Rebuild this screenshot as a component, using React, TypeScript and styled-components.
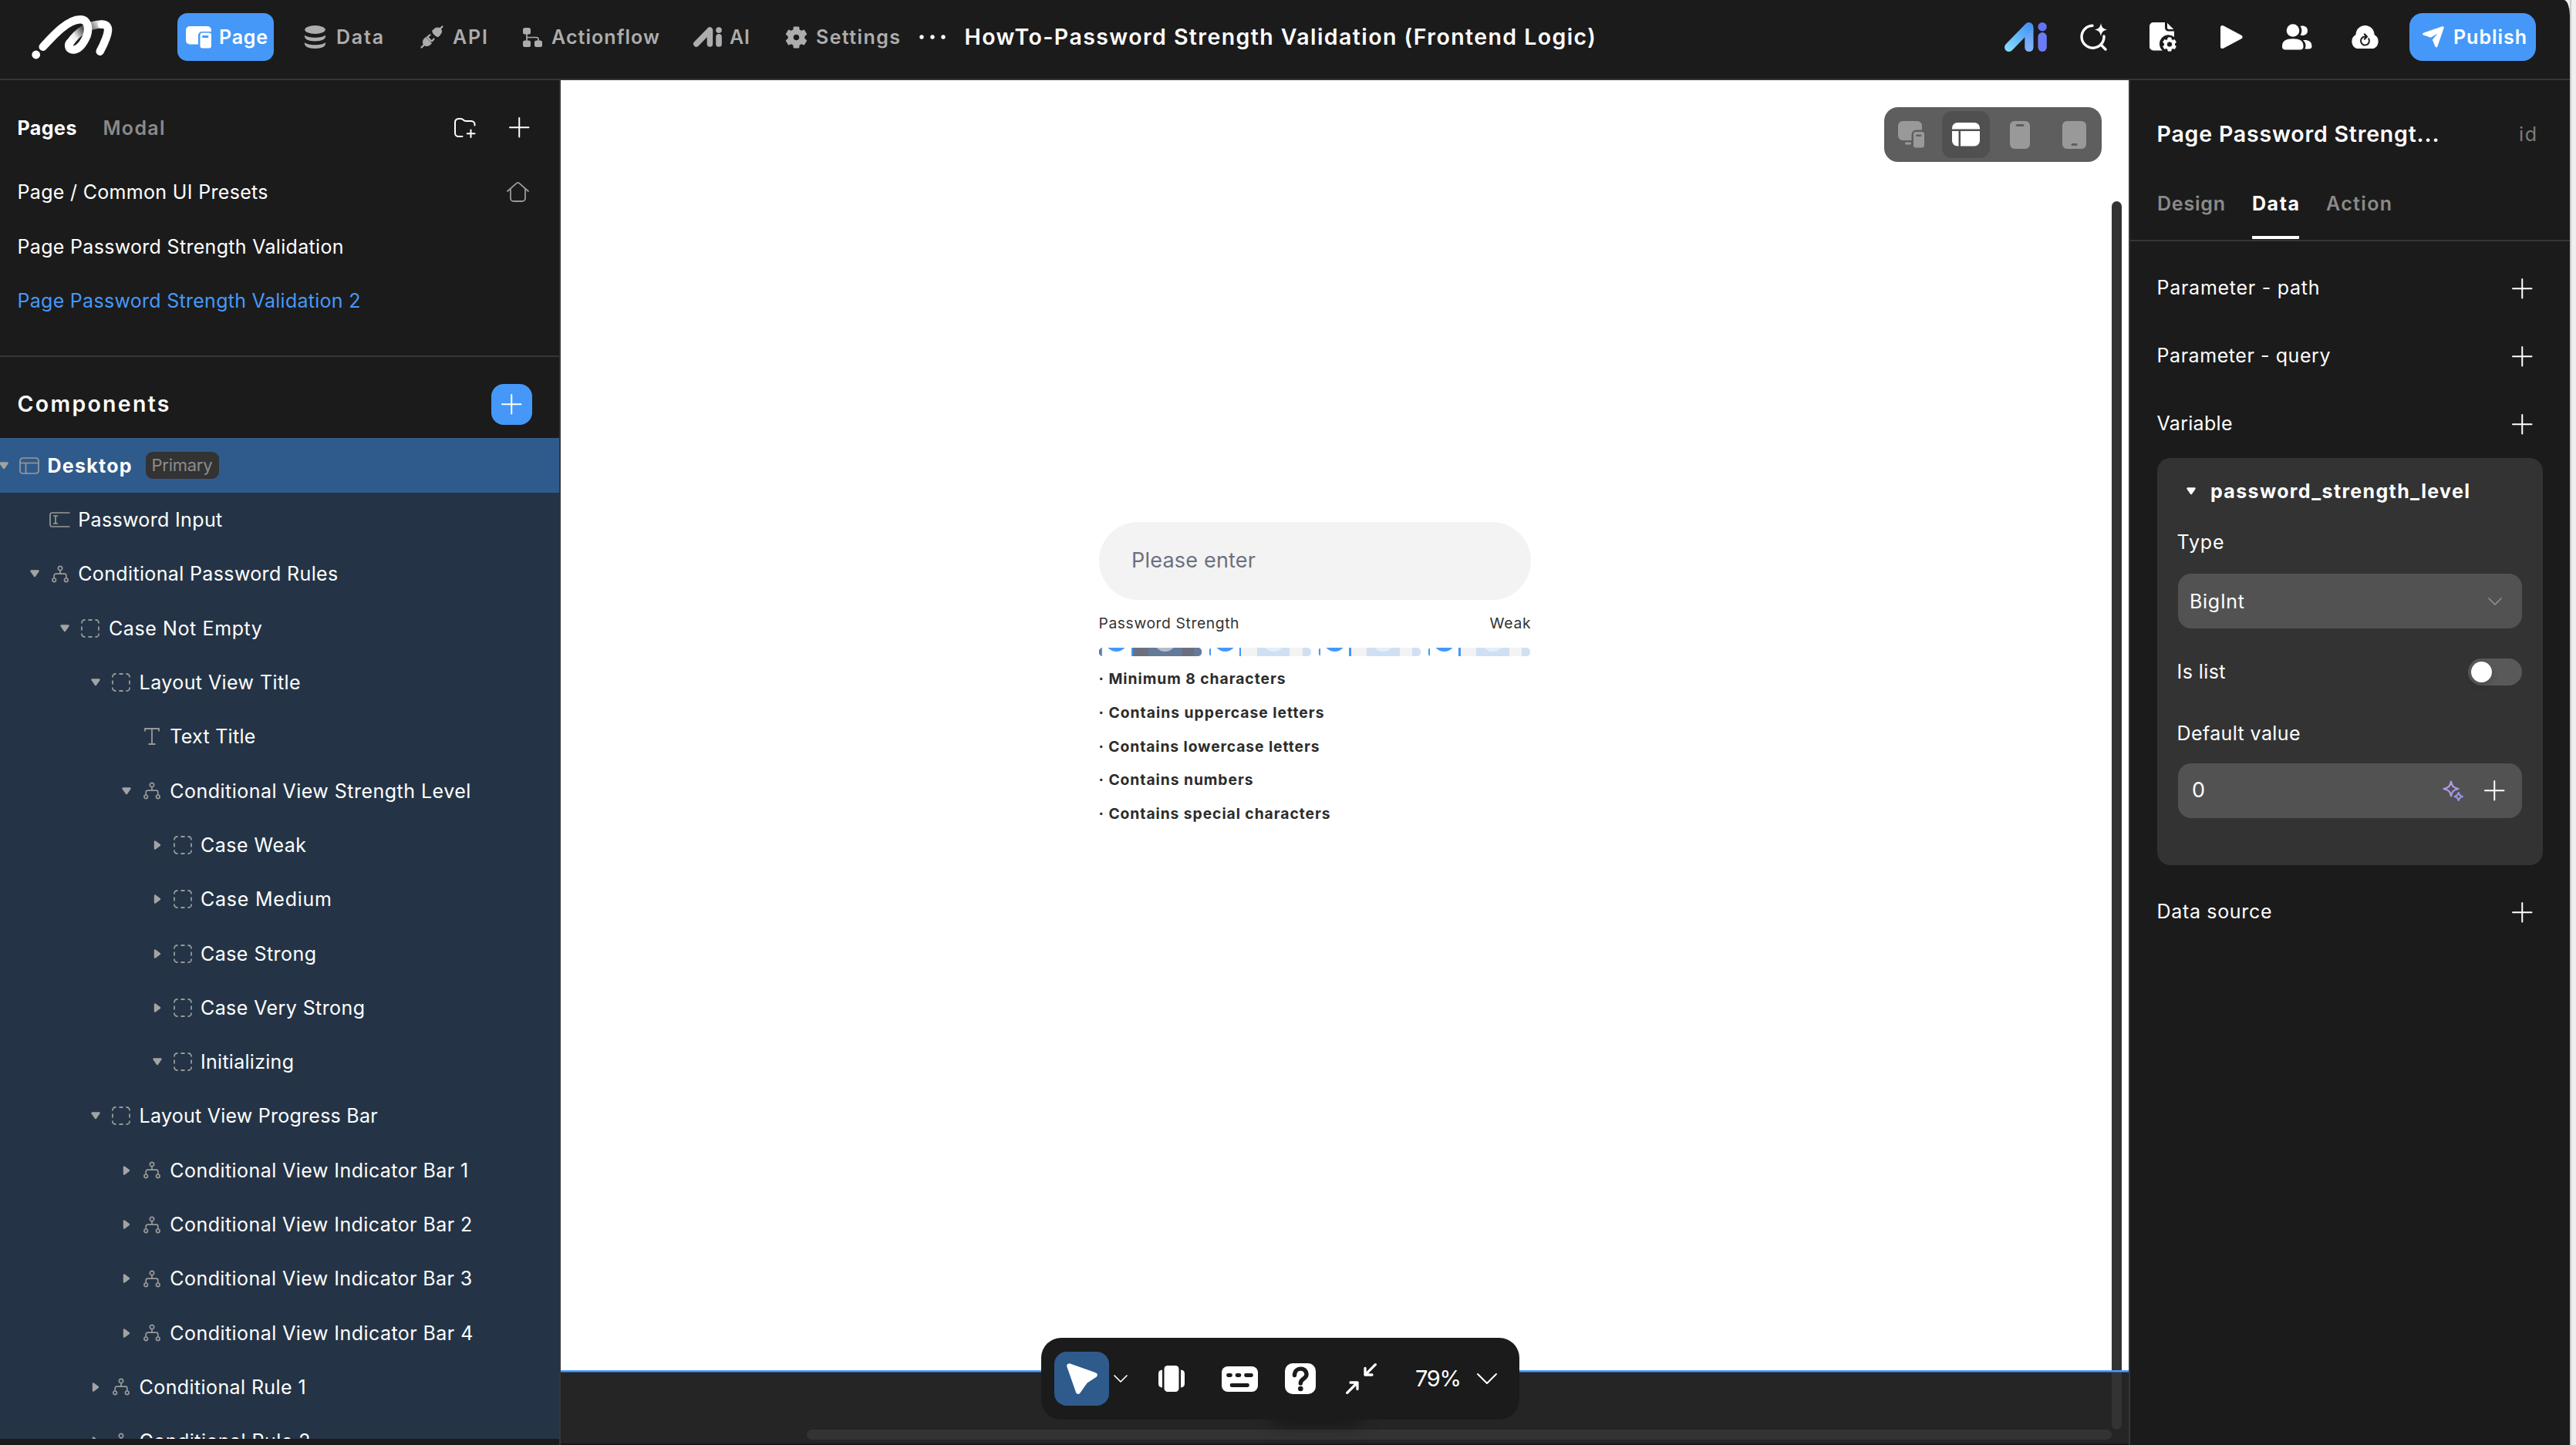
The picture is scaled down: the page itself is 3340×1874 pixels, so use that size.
import React, { useLayoutEffect, useRef, useState } from 'react';
import styled, { createGlobalStyle } from 'styled-components';

const c = {
  bg: '#1b1b1b',
  line: '#363636',
  blue: '#4598f8',
  select: '#2f5b8c',
  tree: '#243446',
  card: '#333333',
  field: '#525252',
  muted: '#8a8a8a',
  nav: '#adadad',
};

const Global = createGlobalStyle`
  * { box-sizing: border-box; }
  html, body { margin: 0; padding: 0; background: #efefef; overflow: hidden; }
  body { font-family: Inter, "Open Sans", "Liberation Sans", sans-serif; color: #fff; }
  svg { display: block; flex: none; overflow: visible; }
`;

/* ---------- text fitted to a column width by tracking ---------- */

const FitBox = styled.span<{ $w: number; $size: number; $weight: number; $color: string }>`
  display: block;
  flex: none;
  width: ${p => p.$w}px;
  font-size: ${p => p.$size}px;
  font-weight: ${p => p.$weight};
  line-height: 1.2;
  color: ${p => p.$color};
  white-space: nowrap;
`;

type FitProps = { children: string; w: number; size?: number; weight?: number; color?: string };

function Fit({ children, w, size = 25, weight = 400, color = '#fff' }: FitProps) {
  const ref = useRef<HTMLSpanElement>(null);
  const [tracking, setTracking] = useState(0);
  useLayoutEffect(() => {
    if (!ref.current || children.length < 2) return;
    ref.current.style.letterSpacing = '0px';
    const natural = ref.current.getBoundingClientRect().width;
    const next = (w - natural) / (children.length - 1);
    ref.current.style.letterSpacing = `${next}px`;
    setTracking(next);
  }, [children, w, size, weight]);
  return (
    <FitBox $w={w} $size={size} $weight={weight} $color={color}>
      <span ref={ref} style={{ letterSpacing: tracking }}>{children}</span>
    </FitBox>
  );
}

/* ---------- icons ---------- */

const Svg = ({ w, h, children }: { w: number; h: number; children: React.ReactNode }) => (
  <svg width={w} height={h} viewBox={`0 0 ${w} ${h}`} fill="none">{children}</svg>
);

const Logo = () => (
  <Svg w={110} h={60}>
    <defs>
      <linearGradient id="fold" gradientUnits="userSpaceOnUse" x1="52" y1="40" x2="92" y2="13">
        <stop offset="0" stopColor="#fff" />
        <stop offset=".22" stopColor="#eee" />
        <stop offset=".5" stopColor="#555" />
        <stop offset=".7" stopColor="#777" />
        <stop offset="1" stopColor="#fff" />
      </linearGradient>
    </defs>
    <path d="M50 38.500C60 24 74 13.500 92.500 13.500" stroke="url(#fold)" strokeWidth="10.500" />
    <path d="M92 13.500C104 13.500 102 25 89.700 48.700" stroke="#fff" strokeWidth="10.500" strokeLinecap="round" />
    <path d="M15.700 42.700C30 27 48 7.300 64 7.300C76.500 7.300 75.500 23 71 32C65.500 43 59 46.800 54.500 46.500C48.500 46 48 40 51 37" stroke="#fff" strokeWidth="10.500" strokeLinecap="round" />
    <circle cx="6.700" cy="53" r="5.400" fill="#fff" />
  </Svg>
);

const PageIcon = () => (
  <Svg w={33} h={29}>
    <path d="M5 0H28a5 5 0 0 1 5 5V7H21a5 5 0 0 0-5 5V23.500H5a5 5 0 0 1-5-5V5a5 5 0 0 1 5-5Z" fill="#fff" />
    <path fillRule="evenodd" d="M21.500 8.500H30a3 3 0 0 1 3 3V25.500a3 3 0 0 1-3 3H21.500a3 3 0 0 1-3-3V11.500a3 3 0 0 1 3-3ZM22.500 12a1.500 1.500 0 0 0 0 3H28a1.500 1.500 0 0 0 0-3Z" fill="#fff" />
  </Svg>
);

const DataIcon = () => (
  <Svg w={27} h={30}>
    <g fill={c.nav}>
      <ellipse cx="13.500" cy="5.500" rx="13.300" ry="5.400" />
      <path d="M.2 12.500C4 16.800 23 16.800 26.800 12.500C28.500 17.500 22 20.500 13.500 20.500S-1.500 17.500 .2 12.500Z" />
      <path d="M.2 22C4 26.300 23 26.300 26.800 22C28.500 27 22 30 13.500 30S-1.500 27 .2 22Z" />
    </g>
  </Svg>
);

const ApiIcon = () => (
  <Svg w={30} h={30}>
    <g fill={c.nav} stroke={c.nav}>
      <path d="M1.500 28.500L6 24M28.500 1.500L24.500 5.500M9 15L12 18M14 20L12 18" strokeWidth="2.400" strokeLinecap="round" />
      <path d="M7 15.500L14.500 23C11.500 27 7.500 27.500 4.800 25.200C2.500 22.500 3 18.500 7 15.500Z" strokeWidth="1" />
      <path d="M10 14.500L12.500 12.200M15.500 20L17.500 17.500" strokeWidth="2.200" strokeLinecap="round" />
      <path d="M16 6.500C19.500 2.500 23.500 2 26.300 4.500S27 11 23.500 14.500C21 15.500 14.500 9.500 16 6.500Z" strokeWidth="1" />
    </g>
  </Svg>
);

const FlowIcon = () => (
  <Svg w={25} h={25}>
    <g fill={c.nav}>
      <rect x="0" y="0" width="10" height="8.500" rx="2.500" />
      <rect x="0" y="16.500" width="10" height="8.500" rx="2.500" />
      <rect x="15" y="16.500" width="10" height="8.500" rx="2.500" />
    </g>
    <path d="M5 6V18M5 12.500H17.500a2.500 2.500 0 0 1 2.500 2.500V18" stroke={c.nav} strokeWidth="1.700" />
  </Svg>
);

const AiMark = ({ color }: { color?: string }) => (
  <svg width={color ? 37 : 55} height={color ? 26 : 38} viewBox="0 0 55 38" fill="none">
    <defs>
      <linearGradient id="aiA" gradientUnits="userSpaceOnUse" x1="3" y1="36" x2="32" y2="3">
        <stop offset="0" stopColor="#85dcfb" />
        <stop offset="1" stopColor="#4593f8" />
      </linearGradient>
      <linearGradient id="aiB" x1="0" y1="0" x2="0" y2="1">
        <stop offset="0" stopColor="#5a9cf8" />
        <stop offset="1" stopColor="#86b4fb" />
      </linearGradient>
    </defs>
    <path d="M37.500 6V32.500a5.600 5.600 0 0 1-11.200 0V15Z" fill={color ?? 'url(#aiB)'} />
    <path d="M5.800 32.300L31.600 5.800" stroke={color ?? 'url(#aiA)'} strokeWidth="11.400" strokeLinecap="round" />
    <rect x="43.400" y="13" width="11.400" height="25" rx="5.700" fill={color ?? '#6c7cf7'} />
    <circle cx="49.100" cy="5.700" r="5.700" fill={color ?? '#6474f6'} />
  </svg>
);

const gearPath = (cx: number, cy: number, r: number, hole: number, teeth: number) => {
  const pts: string[] = [];
  for (let i = 0; i < teeth; i++) {
    const a = (i / teeth) * Math.PI * 2 - Math.PI / 2;
    [[-0.34, 0.76], [-0.22, 1], [0.22, 1], [0.34, 0.76]].forEach(([d, k]) => {
      pts.push(`${(cx + Math.cos(a + d) * r * k).toFixed(2)} ${(cy + Math.sin(a + d) * r * k).toFixed(2)}`);
    });
  }
  return `M${pts.join('L')}ZM${cx - hole} ${cy}a${hole} ${hole} 0 1 0 ${hole * 2} 0a${hole} ${hole} 0 1 0 ${-hole * 2} 0Z`;
};

const GearIcon = () => (
  <Svg w={29} h={29}>
    <path d={gearPath(14.5, 14.5, 13.5, 4.6, 6)} fill={c.nav} stroke={c.nav} strokeWidth="1.600" strokeLinejoin="round" fillRule="evenodd" />
  </Svg>
);

const DotsIcon = () => (
  <Svg w={34} h={8}>
    {[3, 17, 31].map(x => <circle key={x} cx={x} cy="4" r="2.700" fill="#fff" />)}
  </Svg>
);

const SearchIcon = () => (
  <Svg w={34} h={36}>
    <path d="M15 3.200A14.500 14.500 0 1 0 30 17M26 28L32 34" stroke="#fff" strokeWidth="3.400" strokeLinecap="round" />
    <path d="M26 0C27 5.500 29 7.500 34 8.500C29 9.500 27 11.500 26 17C25 11.500 23 9.500 18 8.500C23 7.500 25 5.500 26 0Z" fill="#fff" />
  </Svg>
);

const DocIcon = () => (
  <Svg w={36} h={38}>
    <path d="M5 0H20V7a4.500 4.500 0 0 0 4.500 4.500H32V19A11.500 11.500 0 0 0 17 36.500H5a5 5 0 0 1-5-5V5a5 5 0 0 1 5-5Z" fill="#fff" />
    <path d="M23 .8L31.300 9H25a2 2 0 0 1-2-2Z" fill="#fff" />
    <path d={gearPath(26, 28.5, 8.8, 3.7, 6)} fill="#fff" stroke="#fff" strokeWidth="1" strokeLinejoin="round" fillRule="evenodd" />
  </Svg>
);

const PlayIcon = () => (
  <Svg w={29} h={32}>
    <path d="M2.500 3.500V28.500L26 16Z" fill="#fff" stroke="#fff" strokeWidth="5" strokeLinejoin="round" />
  </Svg>
);

const UsersIcon = () => (
  <Svg w={39} h={34}>
    <g fill="#fff">
      <circle cx="14" cy="8.500" r="8.300" />
      <path d="M0 29C0 22 5 19.300 14 19.300S27.500 22 27.500 29C27.500 32.500 26 33.500 22.500 33.500H5C1.500 33.500 0 32.500 0 29Z" />
      <path d="M23.500 14.500C26 11 26 6.500 23.500 3C28 1.500 33 3.500 33 8.700S28 16 23.500 14.500Z" />
      <path d="M27 21C34.500 20.500 38.500 23 38.500 29C38.500 31.500 37 32.500 34 32.500H29.500C31.500 28 30.500 24 27 21Z" />
    </g>
  </Svg>
);

const CloudIcon = () => (
  <Svg w={41} h={32}>
    <path d="M8.500 13A12 12 0 0 1 32.500 13A10 10 0 0 1 31.500 31H9.500A10 10 0 0 1 8.500 13Z" fill="#fff" />
    <path d="M25.200 18.200A5.500 5.500 0 1 1 20.500 15.500H22M19.800 12.300L23 15.500L19.800 18.700" stroke={c.bg} strokeWidth="2" strokeLinecap="round" strokeLinejoin="round" />
  </Svg>
);

const SendIcon = () => (
  <Svg w={28} h={28}>
    <path d="M25.500 .3C27.200 0 28 .9 27.600 2.500L19.500 26C18.800 27.900 17.200 27.900 16.400 26.200L12.800 17.600L19.500 9.400L10.500 14.800L1.500 11.500C-.4 10.700-.4 9.100 1.500 8.400Z" fill="#fff" />
  </Svg>
);

const Plus = ({ s = 26.5 }: { s?: number }) => (
  <Svg w={s} h={s}>
    <path d={`M${s / 2} 1V${s - 1}M1 ${s / 2}H${s - 1}`} stroke="#fff" strokeWidth="2" strokeLinecap="round" />
  </Svg>
);

const FolderPlus = () => (
  <Svg w={28} h={26}>
    <path d="M10.500 24H5.500a4.500 4.500 0 0 1-4.500-4.500V5.500A4.500 4.500 0 0 1 5.500 1H8.500C12 1 11.500 4 15 4H22A4.500 4.500 0 0 1 26.500 8.500V9.500M21.500 15.500V25M16.800 20.200H26.500" stroke="#fff" strokeWidth="2" strokeLinecap="round" strokeLinejoin="round" />
  </Svg>
);

const HomeIcon = () => (
  <Svg w={29} h={26}>
    <path d="M1 12L12.500 1.800a3 3 0 0 1 4 0L28 12M5 9V21a4 4 0 0 0 4 4H20a4 4 0 0 0 4-4V9" stroke="#9a9a9a" strokeWidth="1.800" strokeLinecap="round" strokeLinejoin="round" />
  </Svg>
);

const Caret = ({ open, color = '#a3a3a3' }: { open: boolean; color?: string }) => (
  <Svg w={12} h={12}>
    <path d={open ? 'M1.500 2.500H10.500L6 9Z' : 'M3 1.500V10.500L9 6Z'} fill={color} stroke={color} strokeWidth="2.400" strokeLinejoin="round" />
  </Svg>
);

const tone = '#999';
const treeIcons: Record<string, React.ReactNode> = {
  desktop: (
    <Svg w={26} h={22}>
      <path d="M4.500 1H21.500a3.500 3.500 0 0 1 3.500 3.500V17.500a3.500 3.500 0 0 1-3.500 3.500H4.500a3.500 3.500 0 0 1-3.500-3.500V4.500A3.500 3.500 0 0 1 4.500 1ZM1 7.500H25M8.500 7.500V21" stroke={tone} strokeWidth="1.700" />
    </Svg>
  ),
  input: (
    <Svg w={27} h={20}>
      <path d="M26.500 1H3.500A2.500 2.500 0 0 0 1 3.500V16.500A2.500 2.500 0 0 0 3.500 19H26.500M5 5H11M5 15H11M8 5V15" stroke={tone} strokeWidth="1.700" />
    </Svg>
  ),
  branch: (
    <Svg w={22} h={23}>
      <g stroke={tone} strokeWidth="1.700">
        <circle cx="11" cy="4" r="2.700" />
        <circle cx="3.200" cy="19.300" r="2.300" />
        <circle cx="18.800" cy="19.300" r="2.300" />
        <path d="M11 6.700V11.200M3.200 17V13.200a2 2 0 0 1 2-2H16.800a2 2 0 0 1 2 2V17" />
      </g>
    </Svg>
  ),
  box: (
    <Svg w={24} h={24}>
      <path d="M1 5.500V4.500A3.500 3.500 0 0 1 4.500 1H5.500M18.500 1H19.500A3.500 3.500 0 0 1 23 4.500V5.500M23 18.500V19.500A3.500 3.500 0 0 1 19.500 23H18.500M5.500 23H4.500A3.500 3.500 0 0 1 1 19.500V18.500M9.500 1H14.500M9.500 23H14.500M1 9.500V14.500M23 9.500V14.500" stroke={tone} strokeWidth="1.800" />
    </Svg>
  ),
  text: (
    <Svg w={20} h={22}>
      <path d="M1 4.500V1H19V4.500M10 1V21M5.500 21H14.500" stroke={tone} strokeWidth="1.800" />
    </Svg>
  ),
};

const Chevron = ({ w, h, color = '#fff', sw = 1.7 }: { w: number; h: number; color?: string; sw?: number }) => (
  <Svg w={w} h={h}>
    <path d={`M1 1L${w / 2} ${h - 1}L${w - 1} 1`} stroke={color} strokeWidth={sw} strokeLinecap="round" strokeLinejoin="round" />
  </Svg>
);

/* ---------- shell ---------- */

const Screen = styled.div`
  display: flex;
  width: 3340px;
  height: 1874px;
  overflow: hidden;
  background: linear-gradient(to right, transparent 3332px, #c9c9c9 3332px, #c9c9c9 3334px, #efefef 3334px);
`;
const Window = styled.div`
  display: flex;
  flex-direction: column;
  width: 3332px;
  height: 1874px;
  background: ${c.bg};
  border-top-right-radius: 8px 20px;
  overflow: hidden;
`;
const Header = styled.header`
  display: flex;
  align-items: center;
  flex: none;
  height: 104px;
  padding: 0 44px 6px 40px;
  border-bottom: 2px solid ${c.line};
`;
const NavItem = styled.div<{ $ml: number; $gap: number }>`
  display: flex;
  align-items: center;
  gap: ${p => p.$gap}px;
  margin-left: ${p => p.$ml}px;
  height: 62px;
`;
const PageButton = styled(NavItem)`
  width: 125px;
  padding-left: 11px;
  border-radius: 13px;
  background: ${c.blue};
`;
const HeaderActions = styled.div`
  display: flex;
  align-items: center;
  margin-left: auto;
`;
const Action = styled.div<{ $mr: number }>`
  margin-right: ${p => p.$mr}px;
`;
const PublishButton = styled.div`
  display: flex;
  align-items: center;
  gap: 12px;
  width: 164px;
  height: 62px;
  padding-left: 17px;
  border-radius: 17px;
  background: ${c.blue};
`;
const Body = styled.div`
  display: flex;
  flex: 1;
  min-height: 0;
`;

/* ---------- left panel ---------- */

const LeftPanel = styled.aside`
  display: flex;
  flex-direction: column;
  flex: none;
  width: 727px;
  padding-bottom: 8px;
  border-right: 2px solid ${c.line};
`;
const PagesSection = styled.section`
  flex: none;
  height: 359px;
  padding-top: 26px;
  border-bottom: 2px solid ${c.line};
`;
const PanelRow = styled.div<{ $h: number }>`
  display: flex;
  align-items: center;
  height: ${p => p.$h}px;
  padding: 0 39px 0 22.500px;
`;
const Spacer = styled.div<{ $w?: number }>`
  flex: ${p => (p.$w ? 'none' : 1)};
  width: ${p => (p.$w ? `${p.$w}px` : 'auto')};
`;
const ComponentsHead = styled.div`
  display: flex;
  align-items: center;
  justify-content: space-between;
  flex: none;
  height: 105px;
  padding: 18px 35px 0 22.500px;
`;
const AddButton = styled.div`
  display: flex;
  align-items: center;
  justify-content: center;
  width: 53px;
  height: 53px;
  border-radius: 16px;
  background: ${c.blue};
`;
const Tree = styled.div`
  flex: 1;
  min-height: 0;
  overflow: hidden;
  background: ${c.tree};
`;
const TreeRow = styled.div<{ $depth: number; $selected?: boolean }>`
  display: flex;
  align-items: center;
  height: ${p => (p.$selected ? 71 : 70.3)}px;
  padding-left: ${p => p.$depth * 39.7}px;
  background: ${p => (p.$selected ? c.select : 'transparent')};
`;
const CaretCell = styled.div`
  display: flex;
  justify-content: center;
  flex: none;
  width: 10px;
`;
const IconCell = styled.div`
  display: flex;
  justify-content: center;
  flex: none;
  width: 28px;
  margin: 0 9.500px 0 14px;
`;
const Badge = styled.div`
  display: flex;
  align-items: center;
  justify-content: center;
  width: 95px;
  height: 35px;
  margin-left: 18px;
  border-radius: 9px;
  background: #333;
`;

/* ---------- canvas ---------- */

const Canvas = styled.main`
  position: relative;
  display: flex;
  flex-direction: column;
  flex: none;
  width: 2033px;
  background: #252525;
  border-bottom: 2px solid #1a1416;
`;
const Artboard = styled.div`
  height: 1673px;
  padding: 573px 0 0 697.500px;
  background: #fff;
`;
const ArtboardEdge = styled.div`
  position: absolute;
  top: 1673px;
  left: 0;
  width: 100%;
  height: 3px;
  background: linear-gradient(#4a9cfb 2px, #2f639c 2px);
`;
const VScroll = styled.div`
  position: absolute;
  top: 157px;
  left: 2011px;
  width: 13px;
  height: 1593px;
  border-radius: 7px;
  background: #333;
`;
const HScroll = styled.div`
  position: absolute;
  top: 1750px;
  left: 319px;
  width: 1692px;
  height: 13px;
  border-radius: 7px;
  background: #333;
`;
const Widget = styled.div`
  display: flex;
  flex-direction: column;
  width: 560px;
`;
const PasswordField = styled.div`
  display: flex;
  align-items: center;
  height: 101px;
  padding-left: 42.500px;
  border-radius: 51px;
  background: #f3f3f3;
`;
const StrengthHead = styled.div`
  display: flex;
  align-items: center;
  justify-content: space-between;
  height: 62px;
`;
const Bars = styled.div`
  display: flex;
  justify-content: space-between;
  height: 10.500px;
  margin-bottom: 8.500px;
`;
const Bar = styled.div<{ $bg: string }>`
  position: relative;
  display: flex;
  width: 133.500px;
  height: 10.500px;
  border-radius: 5px;
  overflow: hidden;
  background: ${p => p.$bg};
`;
const Segment = styled.div<{ $w: number; $bg: string }>`
  flex: none;
  width: ${p => p.$w}px;
  background: ${p => p.$bg};
`;
const Blob = styled.div<{ $x: number; $bg: string }>`
  position: absolute;
  top: -24px;
  left: ${p => p.$x - 14.5}px;
  width: 29px;
  height: 29px;
  border-radius: 50%;
  background: ${p => p.$bg};
`;
const Rule = styled.div`
  display: flex;
  align-items: center;
  height: 43.700px;
`;
const DeviceBar = styled.div`
  position: absolute;
  top: 35px;
  left: 1716px;
  display: flex;
  align-items: center;
  gap: 8.600px;
  width: 282px;
  height: 71px;
  padding: 0 4px;
  border-radius: 18px;
  background: #5e5e5e;
`;
const Device = styled.div<{ $on?: boolean }>`
  display: flex;
  align-items: center;
  justify-content: center;
  flex: none;
  width: 62px;
  height: 61px;
  border-radius: 13px;
  background: ${p => (p.$on ? '#505050' : 'transparent')};
`;
const ToolBar = styled.div`
  position: absolute;
  top: 1631px;
  left: 623px;
  display: flex;
  align-items: center;
  width: 620px;
  height: 106px;
  padding-left: 17px;
  border-radius: 26px;
  background: ${c.bg};
`;
const ToolShadow = styled.div`
  position: absolute;
  top: 1690px;
  left: 925px;
  width: 110px;
  height: 46px;
  box-shadow: 0 4px 26px 2px rgba(0, 0, 0, 0.45);
`;
const CursorButton = styled.div`
  display: flex;
  align-items: center;
  justify-content: center;
  width: 71px;
  height: 70px;
  border-radius: 16px;
  background: ${c.select};
`;
const Tool = styled.div<{ $ml: number }>`
  margin-left: ${p => p.$ml}px;
`;

/* ---------- right panel ---------- */

const RightPanel = styled.aside`
  flex: none;
  width: 572px;
  border-left: 2px solid ${c.line};
`;
const TitleRow = styled.div`
  display: flex;
  align-items: center;
  justify-content: space-between;
  height: 138px;
  padding: 2px 43px 0 34.500px;
`;
const Tabs = styled.div`
  display: flex;
  height: 71px;
  padding-left: 35px;
  border-bottom: 2px solid ${c.line};
`;
const Tab = styled.div<{ $on?: boolean; $mr: number }>`
  height: 68px;
  margin-right: ${p => p.$mr}px;
  padding: 7px 0 0;
  border-bottom: 4px solid ${p => (p.$on ? '#fff' : 'transparent')};
  border-radius: 1px;
`;
const Section = styled.div`
  display: flex;
  align-items: center;
  justify-content: space-between;
  height: 88.100px;
  padding: 0 48.500px 0 34.500px;
  & > span {
    margin-top: -3px;
  }
`;
const Sections = styled.div`
  padding-top: 17px;
`;
const Card = styled.div`
  height: 528px;
  margin: 0 35px 17px;
  padding: 0 27px;
  border-radius: 17px;
  background: ${c.card};
`;
const CardTitle = styled.div`
  display: flex;
  align-items: center;
  gap: 19px;
  height: 86px;
  padding-left: 11px;
`;
const Label = styled.div<{ $h: number; $pt: number }>`
  display: flex;
  justify-content: space-between;
  height: ${p => p.$h}px;
  padding-top: ${p => p.$pt}px;
  margin-left: -1.500px;
`;
const Field = styled.div<{ $pr: number; $pl: number }>`
  display: flex;
  align-items: center;
  justify-content: space-between;
  height: 70.500px;
  padding: 0 ${p => p.$pr}px 0 ${p => p.$pl}px;
  border-radius: 17px;
  background: ${c.field};
`;
const FieldActions = styled.div`
  display: flex;
  align-items: center;
  gap: 27px;
`;
const Toggle = styled.div`
  width: 70px;
  height: 35px;
  margin-top: -2px;
  padding: 4px;
  border-radius: 18px;
  background: #595959;
`;
const Knob = styled.div`
  width: 27px;
  height: 27px;
  border-radius: 50%;
  background: #fff;
  box-shadow: 0 4px 8px rgba(0, 35, 11, 0.2);
`;

const tree: { d: number; i: string; t: string; w: number; open?: boolean; leaf?: boolean }[] = [
  { d: 1, i: 'input', t: 'Password Input', w: 187, leaf: true },
  { d: 1, i: 'branch', t: 'Conditional Password Rules', w: 337, open: true },
  { d: 2, i: 'box', t: 'Case Not Empty', w: 199, open: true },
  { d: 3, i: 'box', t: 'Layout View Title', w: 209, open: true },
  { d: 4, i: 'text', t: 'Text Title', w: 111, leaf: true },
  { d: 4, i: 'branch', t: 'Conditional View Strength Level', w: 390, open: true },
  { d: 5, i: 'box', t: 'Case Weak', w: 137 },
  { d: 5, i: 'box', t: 'Case Medium', w: 170 },
  { d: 5, i: 'box', t: 'Case Strong', w: 150 },
  { d: 5, i: 'box', t: 'Case Very Strong', w: 213 },
  { d: 5, i: 'box', t: 'Initializing', w: 121, open: true },
  { d: 3, i: 'box', t: 'Layout View Progress Bar', w: 309, open: true },
  { d: 4, i: 'branch', t: 'Conditional View Indicator Bar 1', w: 387 },
  { d: 4, i: 'branch', t: 'Conditional View Indicator Bar 2', w: 392 },
  { d: 4, i: 'branch', t: 'Conditional View Indicator Bar 3', w: 392 },
  { d: 4, i: 'branch', t: 'Conditional View Indicator Bar 4', w: 393 },
  { d: 3, i: 'branch', t: 'Conditional Rule 1', w: 216 },
  { d: 3, i: 'branch', t: 'Conditional Rule 2', w: 222 },
];

const rules: [string, number][] = [
  ['· Minimum 8 characters', 242],
  ['· Contains uppercase letters', 292],
  ['· Contains lowercase letters', 286],
  ['· Contains numbers', 200],
  ['· Contains special characters', 300],
];

function StrengthBar({ filled }: { filled?: boolean }) {
  const base = filled ? '#6b7080' : '#f3f3f3';
  const over = filled ? '#657a99' : '#d0e0f3';
  const shift = filled ? 1.5 : 0;
  return (
    <Bar $bg={base}>
      <Segment $w={1 + shift} $bg={base} />
      <Segment $w={2} $bg={c.blue} />
      <Segment $w={37.5} $bg="#fff" />
      <Segment $w={2.2} $bg={c.blue} />
      <Segment $w={20.8} $bg={base} />
      <Segment $w={42.3} $bg={over} />
      <Segment $w={16.2} $bg={base} />
      <Segment $w={14} $bg={over} />
      <Blob $x={21.7 + shift} $bg={c.blue} />
      <Blob $x={84.6 + shift} $bg={filled ? '#b2bccc' : '#e4eefa'} />
    </Bar>
  );
}

export default function App() {
  return (
    <Screen>
      <Global />
      <Window>
        <Header>
          <Logo />
          <PageButton $ml={80} $gap={10}><PageIcon /><Fit w={63} weight={600}>Page</Fit></PageButton>
          <NavItem $ml={40} $gap={14}><DataIcon /><Fit w={61} weight={600} color={c.nav}>Data</Fit></NavItem>
          <NavItem $ml={48} $gap={12}><ApiIcon /><Fit w={45} weight={600} color={c.nav}>API</Fit></NavItem>
          <NavItem $ml={46} $gap={12}><FlowIcon /><Fit w={140} weight={600} color={c.nav}>Actionflow</Fit></NavItem>
          <NavItem $ml={44} $gap={10}><AiMark color={c.nav} /><Fit w={26} weight={600} color={c.nav}>AI</Fit></NavItem>
          <NavItem $ml={46} $gap={11}><GearIcon /><Fit w={109} weight={600} color={c.nav}>Settings</Fit></NavItem>
          <NavItem $ml={24.5} $gap={25}><DotsIcon /><Fit w={818} weight={600} size={28.5}>HowTo-Password Strength Validation (Frontend Logic)</Fit></NavItem>
          <HeaderActions>
            <Action $mr={44}><AiMark /></Action>
            <Action $mr={55}><SearchIcon /></Action>
            <Action $mr={56}><DocIcon /></Action>
            <Action $mr={51}><PlayIcon /></Action>
            <Action $mr={48}><UsersIcon /></Action>
            <Action $mr={37}><CloudIcon /></Action>
            <PublishButton><SendIcon /><Fit w={95} weight={600}>Publish</Fit></PublishButton>
          </HeaderActions>
        </Header>
        <Body>
          <LeftPanel>
            <PagesSection>
              <PanelRow $h={71}>
                <Fit w={77} weight={700}>Pages</Fit>
                <Spacer $w={34} />
                <Fit w={80} weight={600} color={c.muted}>Modal</Fit>
                <Spacer />
                <FolderPlus />
                <Spacer $w={43} />
                <Plus />
              </PanelRow>
              <PanelRow $h={95.4}>
                <Fit w={325}>Page / Common UI Presets</Fit>
                <Spacer />
                <HomeIcon />
              </PanelRow>
              <PanelRow $h={47}><Fit w={423}>Page Password Strength Validation</Fit></PanelRow>
              <PanelRow $h={94}><Fit w={445} color={c.blue}>Page Password Strength Validation 2</Fit></PanelRow>
            </PagesSection>
            <ComponentsHead>
              <Fit w={197} weight={600} size={28.5}>Components</Fit>
              <AddButton><Plus /></AddButton>
            </ComponentsHead>
            <Tree>
              <TreeRow $depth={0} $selected>
                <CaretCell><Caret open /></CaretCell>
                <IconCell>{treeIcons.desktop}</IconCell>
                <Fit w={109} weight={700}>Desktop</Fit>
                <Badge><Fit w={79} size={22} color="#8c8c8c">Primary</Fit></Badge>
              </TreeRow>
              {tree.map(n => (
                <TreeRow key={n.t} $depth={n.d}>
                  <CaretCell>{!n.leaf && <Caret open={!!n.open} />}</CaretCell>
                  <IconCell>{treeIcons[n.i]}</IconCell>
                  <Fit w={n.w}>{n.t}</Fit>
                </TreeRow>
              ))}
            </Tree>
          </LeftPanel>

          <Canvas>
            <Artboard>
              <Widget>
                <PasswordField><Fit w={161} size={27} color="#6b7080">Please enter</Fit></PasswordField>
                <StrengthHead>
                  <Fit w={182} size={19.3} color="#333">Password Strength</Fit>
                  <Fit w={53} size={19.3} color="#333">Weak</Fit>
                </StrengthHead>
                <Bars>
                  <StrengthBar filled />
                  <StrengthBar />
                  <StrengthBar />
                  <StrengthBar />
                </Bars>
                {rules.map(([t, w]) => (
                  <Rule key={t}><Fit w={w} size={19.3} weight={700} color="#2c2c2c">{t}</Fit></Rule>
                ))}
              </Widget>
            </Artboard>
            <VScroll />
            <HScroll />
            <ArtboardEdge />
            <DeviceBar>
              <Device>
                <Svg w={34} h={35}>
                  <g fill="#999">
                    <path d="M6 0H25a6 6 0 0 1 6 6V11.500H23.500a6 6 0 0 0-6 6V25H6a6 6 0 0 1-6-6V6A6 6 0 0 1 6 0Z" />
                    <rect x="9" y="27.500" width="8" height="3" rx="1.500" />
                    <path fillRule="evenodd" d="M23 14H31a3 3 0 0 1 3 3V31.500a3 3 0 0 1-3 3H23a3 3 0 0 1-3-3V17a3 3 0 0 1 3-3ZM24.500 17.500a1.300 1.300 0 0 0 0 2.600H29a1.300 1.300 0 0 0 0-2.600Z" />
                  </g>
                </Svg>
              </Device>
              <Device $on>
                <Svg w={36} h={31}>
                  <g fill="#fff">
                    <path d="M7 0H29a7 7 0 0 1 7 7V8.500H0V7a7 7 0 0 1 7-7Z" />
                    <path d="M0 11H8.500V30.500H7a7 7 0 0 1-7-7Z" />
                    <path d="M11 11H36V23.500a7 7 0 0 1-7 7H11Z" />
                  </g>
                </Svg>
              </Device>
              <Device>
                <Svg w={26} h={36}>
                  <rect width="26" height="36" rx="6" fill="#999" />
                  <rect x="7.500" y="4" width="11" height="3" rx="1.500" fill="#5e5e5e" />
                </Svg>
              </Device>
              <Device>
                <Svg w={31} h={36}>
                  <rect width="31" height="36" rx="6" fill="#999" />
                  <rect x="11.500" y="29" width="8" height="3" rx="1.500" fill="#5e5e5e" />
                </Svg>
              </Device>
            </DeviceBar>
            <ToolShadow />
            <ToolBar>
              <CursorButton>
                <Svg w={40} h={40}>
                  <path d="M3.500 3.500L36.500 15.200L24.500 23L15 36.500Z" fill="#fff" stroke="#fff" strokeWidth="6.500" strokeLinejoin="round" />
                </Svg>
              </CursorButton>
              <Tool $ml={6}><Chevron w={18} h={10} /></Tool>
              <Tool $ml={40}>
                <Svg w={34} h={34}>
                  <rect x="7.500" width="19" height="34" rx="4.500" fill="#fff" />
                  <path d="M5 5.500C1.500 6 0 7.500 0 11V23C0 26.500 1.500 28 5 28.500ZM29 5.500C32.500 6 34 7.500 34 11V23C34 26.500 32.500 28 29 28.500Z" fill="#fff" />
                </Svg>
              </Tool>
              <Tool $ml={48}>
                <Svg w={47} h={33}>
                  <rect width="47" height="33" rx="8" fill="#fff" />
                  <path d="M8.500 11.500H11.500M20 11.500H23M31.500 11.500H38.500M13 24.500H33.500" stroke={c.bg} strokeWidth="4.800" strokeLinecap="round" />
                </Svg>
              </Tool>
              <Tool $ml={35}>
                <Svg w={40} h={40}>
                  <rect width="40" height="40" rx="10" fill="#fff" />
                  <path d="M12.500 15.500C12.500 4.500 28 4.500 28 14.500C28 20.500 20.300 19.500 20.300 26" stroke={c.bg} strokeWidth="5.400" strokeLinecap="round" />
                  <circle cx="20.300" cy="33" r="3.300" fill={c.bg} />
                </Svg>
              </Tool>
              <Tool $ml={39}>
                <Svg w={40} h={40}>
                  <path d="M38.300 1.700L25 15M25 6.500V15H34M1.700 38.300L15 25M6 25H15V33.500" stroke="#fff" strokeWidth="3.300" strokeLinecap="round" strokeLinejoin="round" />
                </Svg>
              </Tool>
              <Tool $ml={50}><Fit w={60} size={29}>79%</Fit></Tool>
              <Tool $ml={20}><Chevron w={26} h={14} sw={2} /></Tool>
            </ToolBar>
          </Canvas>

          <RightPanel>
            <TitleRow>
              <Fit w={366} weight={600} size={28.5}>Page Password Strengt...</Fit>
              <Fit w={23} color="#7c7c7c">id</Fit>
            </TitleRow>
            <Tabs>
              <Tab $mr={35}><Fit w={88} weight={600} color={c.muted}>Design</Fit></Tab>
              <Tab $on $mr={35}><Fit w={61} weight={700}>Data</Fit></Tab>
              <Tab $mr={0}><Fit w={85} weight={600} color={c.muted}>Action</Fit></Tab>
            </Tabs>
            <Sections>
              <Section><Fit w={211}>Parameter - path</Fit><Plus /></Section>
              <Section><Fit w={225}>Parameter - query</Fit><Plus /></Section>
              <Section><Fit w={98}>Variable</Fit><Plus /></Section>
              <Card>
                <CardTitle><Caret open color="#fff" /><Fit w={336} weight={700}>password_strength_level</Fit></CardTitle>
                <Label $h={64} $pt={8}><Fit w={61}>Type</Fit></Label>
                <Field $pl={15} $pr={26}><Fit w={71}>BigInt</Fit><Chevron w={18} h={10} color="#909090" /></Field>
                <Label $h={81} $pt={41}><Fit w={63}>Is list</Fit><Toggle><Knob /></Toggle></Label>
                <Label $h={94.5} $pt={40.5}><Fit w={160}>Default value</Fit></Label>
                <Field $pl={18} $pr={23}>
                  <Fit w={18} size={27}>0</Fit>
                  <FieldActions>
                    <Svg w={27} h={27}>
                      <defs>
                        <linearGradient id="spark" x1="0" y1="0" x2="1" y2="1">
                          <stop offset="0" stopColor="#c89ae8" />
                          <stop offset="1" stopColor="#8c95e8" />
                        </linearGradient>
                      </defs>
                      <path d="M11 1.500C12.200 7.500 14 9.500 20.500 11C14 12.500 12.200 14.500 11 20.500C9.800 14.500 8 12.500 1.500 11C8 9.500 9.800 7.500 11 1.500ZM20.700 16C21.500 19 22.500 20.200 25.800 21C22.500 21.800 21.500 23 20.700 26C20 23 19 21.800 15.800 21C19 20.200 20 19 20.700 16Z" stroke="url(#spark)" strokeWidth="2.200" strokeLinejoin="round" />
                    </Svg>
                    <Plus />
                  </FieldActions>
                </Field>
              </Card>
              <Section><Fit w={149}>Data source</Fit><Plus /></Section>
            </Sections>
          </RightPanel>
        </Body>
      </Window>
    </Screen>
  );
}
